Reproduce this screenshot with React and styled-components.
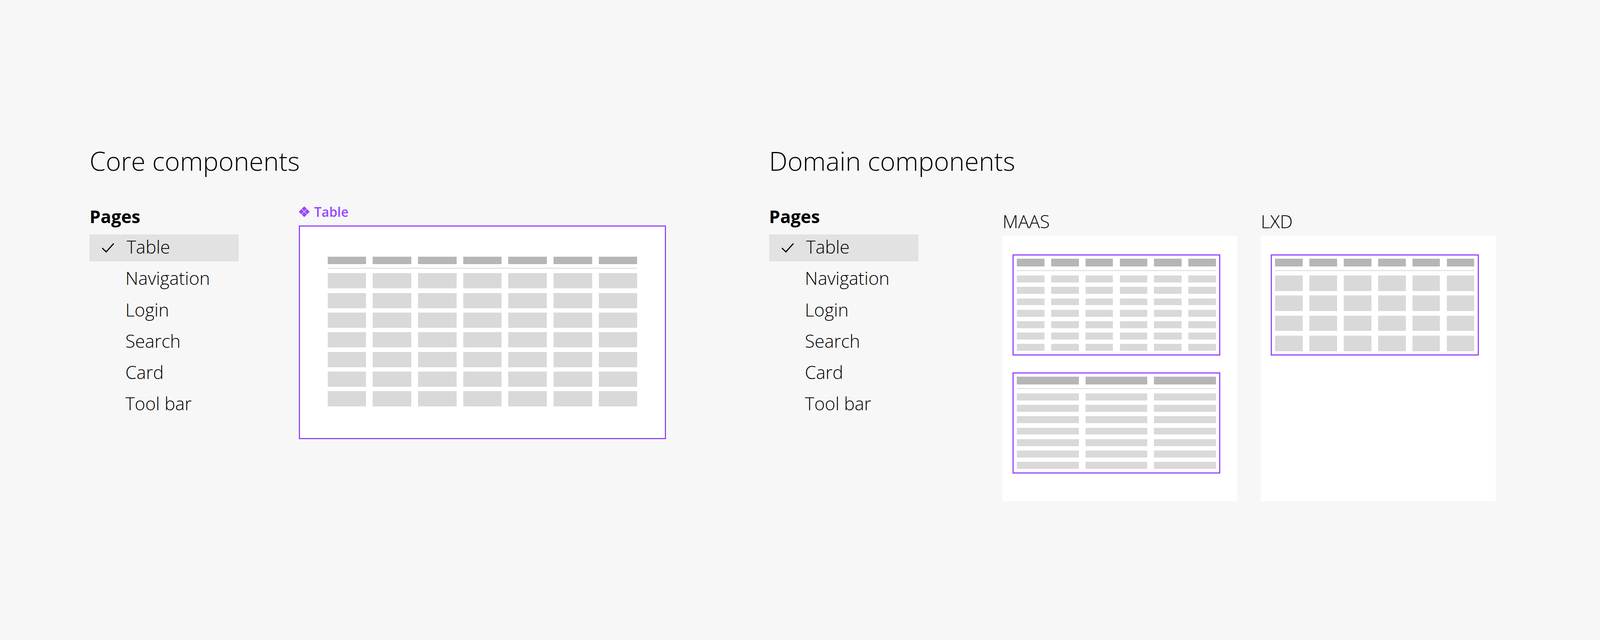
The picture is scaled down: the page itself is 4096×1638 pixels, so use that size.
import React from "react";
import styled, { createGlobalStyle } from "styled-components";

const u = (n) => `${(n * 0.819).toFixed(3)}px`;
const FONT = `"Open Sans", "Noto Sans", "Liberation Sans", sans-serif`;
const PURPLE = "#9747ff";

const Global = createGlobalStyle`
  html, body { margin: 0; padding: 0; background: #f7f7f7; }
  body { font-family: ${FONT}; color: #000; }
`;

const Page = styled.main`
  width: 4096px;
  height: 1638px;
  overflow: hidden;
  box-sizing: border-box;
  background: #f7f7f7;
  display: flex;
  padding: ${u(450)} 0 0 ${u(280)};
`;

const Section = styled.section`
  flex: none;
  width: ${(p) => u(p.$width)};
`;

const Heading = styled.h2`
  margin: 0 0 ${u(70)} 0;
  height: ${u(110)};
  line-height: ${u(105)};
  font-size: ${u(81.5)};
  font-weight: 300;
  white-space: nowrap;
`;

const Body = styled.div`
  display: flex;
  align-items: flex-start;
  gap: ${(p) => u(p.$gap)};
`;

const Sidebar = styled.nav`
  flex: none;
  width: ${u(466)};
`;

const SidebarTitle = styled.div`
  height: ${u(102.7)};
  padding: ${u(13)} 0 0 0;
  box-sizing: border-box;
  line-height: ${u(66)};
  font-size: ${u(55)};
  font-weight: 700;
`;

const PageList = styled.ul`
  list-style: none;
  margin: 0;
  padding: 0;
  display: flex;
  flex-direction: column;
  gap: ${u(14)};
`;

const PageItem = styled.li`
  position: relative;
  height: ${u(84)};
  line-height: ${u(78)};
  padding-left: ${(p) => u(p.$selected ? 116 : 112)};
  font-size: ${u(56)};
  font-weight: 300;
  background: ${(p) => (p.$selected ? "#e2e2e2" : "transparent")};
`;

const CheckIcon = styled.svg`
  position: absolute;
  left: ${u(38)};
  top: ${u(27)};
  width: ${u(40)};
  height: ${u(30)};
`;

const ComponentTag = styled.div`
  height: ${u(74)};
  display: flex;
  align-items: flex-start;
  gap: ${u(14)};
  padding-top: ${u(15)};
  box-sizing: border-box;
  color: ${PURPLE};
  font-size: ${u(41)};
  font-weight: 600;
  line-height: ${u(36)};
`;

const TagIcon = styled.svg`
  flex: none;
  width: ${u(34)};
  height: ${u(34)};
`;

const Frame = styled.div`
  box-sizing: border-box;
  width: ${(p) => u(p.$w)};
  height: ${(p) => u(p.$h)};
  padding: ${(p) => u(p.$top)} ${(p) => u(p.$side)} 0;
  background: #fff;
  border: 3px solid ${PURPLE};
`;

const CellGrid = styled.div`
  display: grid;
  grid-template-columns: repeat(${(p) => p.$cols}, 1fr);
  column-gap: ${u(21)};
  row-gap: ${(p) => u(p.$rowGap || 0)};
`;

const HeadCell = styled.div`
  height: ${u(24.3)};
  background: #b6b6b6;
`;

const Rule = styled.div`
  height: ${u(3.6)};
  margin: ${u(10.4)} 0 ${u(14)};
  background: #e3e3e3;
`;

const Cell = styled.div`
  height: ${(p) => u(p.$h)};
  background: #d9d9d9;
`;

const Products = styled.div`
  display: flex;
  gap: ${u(74)};
`;

const ProductLabel = styled.div`
  height: ${u(105.7)};
  padding: ${u(38)} 0 0 0;
  box-sizing: border-box;
  line-height: ${u(50)};
  font-size: ${u(56.5)};
  font-weight: 300;
`;

const ProductPanel = styled.div`
  box-sizing: border-box;
  width: ${u(733.5)};
  height: ${u(831)};
  padding: ${u(59)} 0 0 ${u(31)};
  background: #fff;
  display: flex;
  flex-direction: column;
  gap: ${u(52)};
`;

const PAGES = ["Table", "Navigation", "Login", "Search", "Card", "Tool bar"];

const PagesMenu = () => (
  <Sidebar>
    <SidebarTitle>Pages</SidebarTitle>
    <PageList>
      {PAGES.map((name, i) => (
        <PageItem key={name} $selected={i === 0}>
          {i === 0 && (
            <CheckIcon viewBox="0 0 40 30" fill="none">
              <path d="M2 15.5 L14.5 27.5 L38 1.5" stroke="#000" strokeWidth="3.6" />
            </CheckIcon>
          )}
          {name}
        </PageItem>
      ))}
    </PageList>
  </Sidebar>
);

const MiniTable = ({ cols, rows, rowH, rowGap, w, h, top, side }) => (
  <Frame $w={w} $h={h} $top={top} $side={side}>
    <CellGrid $cols={cols}>
      {Array.from({ length: cols }, (_, i) => (
        <HeadCell key={i} />
      ))}
    </CellGrid>
    <Rule />
    <CellGrid $cols={cols} $rowGap={rowGap}>
      {Array.from({ length: cols * rows }, (_, i) => (
        <Cell key={i} $h={rowH} />
      ))}
    </CellGrid>
  </Frame>
);

const small = { w: 650, h: 316.7, top: 10.34, side: 10 };

export default function App() {
  return (
    <>
      <Global />
      <Page>
        <Section $width={2124}>
          <Heading>Core components</Heading>
          <Body $gap={188}>
            <PagesMenu />
            <div>
              <ComponentTag>
                <TagIcon viewBox="0 0 34 34">
                  <g fill={PURPLE}>
                    <polygon points="17,0 25,8 17,16 9,8" />
                    <polygon points="17,18 25,26 17,34 9,26" />
                    <polygon points="8,9 16,17 8,25 0,17" />
                    <polygon points="26,9 34,17 26,25 18,17" />
                  </g>
                </TagIcon>
                Table
              </ComponentTag>
              <MiniTable cols={7} rows={7} rowH={47.6} rowGap={13.9} w={1148} h={668} top={94} side={86.3} />
            </div>
          </Body>
        </Section>
        <Section $width={1800}>
          <Heading>Domain components</Heading>
          <Body $gap={263.7}>
            <PagesMenu />
            <Products>
              <div>
                <ProductLabel>MAAS</ProductLabel>
                <ProductPanel>
                  <MiniTable cols={6} rows={7} rowH={21.7} rowGap={14} {...small} />
                  <MiniTable cols={3} rows={7} rowH={21.7} rowGap={14} {...small} />
                </ProductPanel>
              </div>
              <div>
                <ProductLabel>LXD</ProductLabel>
                <ProductPanel>
                  <MiniTable cols={6} rows={4} rowH={48.3} rowGap={14.4} {...small} />
                </ProductPanel>
              </div>
            </Products>
          </Body>
        </Section>
      </Page>
    </>
  );
}
